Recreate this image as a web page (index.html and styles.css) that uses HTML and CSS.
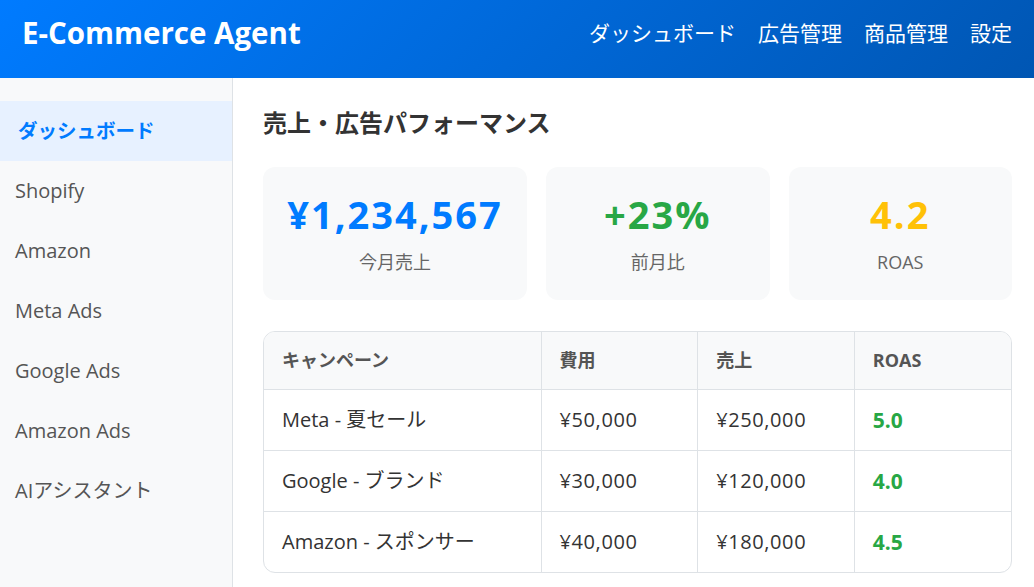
FILE: index.html
```html
<!DOCTYPE html>
<html lang="ja">
<head>
<meta charset="utf-8">
<title>E-Commerce Agent</title>
<link rel="stylesheet" href="styles.css">
</head>
<body>
<header class="topbar">
  <div class="brand">E-Commerce Agent</div>
  <nav class="topnav">
    <a>ダッシュボード</a>
    <a>広告管理</a>
    <a>商品管理</a>
    <a>設定</a>
  </nav>
</header>
<div class="layout">
  <aside class="sidebar">
    <div class="side-item active">ダッシュボード</div>
    <div class="side-item">Shopify</div>
    <div class="side-item">Amazon</div>
    <div class="side-item">Meta Ads</div>
    <div class="side-item">Google Ads</div>
    <div class="side-item">Amazon Ads</div>
    <div class="side-item">AIアシスタント</div>
  </aside>
  <main class="main">
    <h2 class="title">売上・広告パフォーマンス</h2>
    <div class="cards">
      <div class="card">
        <div class="value blue">¥1,234,567</div>
        <div class="label">今月売上</div>
      </div>
      <div class="card">
        <div class="value green">+23%</div>
        <div class="label">前月比</div>
      </div>
      <div class="card">
        <div class="value yellow">4.2</div>
        <div class="label">ROAS</div>
      </div>
    </div>
    <div class="table-wrap">
      <table class="table">
        <thead>
          <tr><th>キャンペーン</th><th>費用</th><th>売上</th><th>ROAS</th></tr>
        </thead>
        <tbody>
          <tr><td>Meta - 夏セール</td><td class="num">¥50,000</td><td class="num">¥250,000</td><td class="roas">5.0</td></tr>
          <tr><td>Google - ブランド</td><td class="num">¥30,000</td><td class="num">¥120,000</td><td class="roas">4.0</td></tr>
          <tr><td>Amazon - スポンサー</td><td class="num">¥40,000</td><td class="num">¥180,000</td><td class="roas">4.5</td></tr>
        </tbody>
      </table>
    </div>
  </main>
</div>
</body>
</html>
```
FILE: styles.css
```css
* { box-sizing: border-box; }
html, body { margin: 0; padding: 0; }
body {
  font-family: "Open Sans", "Noto Sans CJK JP", sans-serif;
  color: #333;
  background: #fff;
  width: 1034px;
  height: 587px;
  overflow: hidden;
}
.topbar {
  height: 78px;
  background: linear-gradient(135deg, #007bff 0%, #0056b3 100%);
  color: #fff;
  display: flex;
  align-items: center;
  justify-content: space-between;
  padding: 0 22px 12px 22px;
}
.brand {
  font-size: 29.5px;
  font-weight: 700;
  line-height: 36px;
}
.topnav {
  display: flex;
  gap: 22px;
}
.topnav a {
  font-size: 21px;
  line-height: 30px;
  color: #fff;
}
.layout {
  display: flex;
  height: 509px;
}
.sidebar {
  width: 233px;
  flex: none;
  background: #f8f9fa;
  border-right: 1px solid #dee2e6;
  padding-top: 23px;
}
.side-item {
  height: 60px;
  display: flex;
  align-items: center;
  padding-left: 15px;
  font-size: 20px;
  line-height: 28px;
  color: #555;
}
.side-item.active {
  background: #e7f1ff;
  color: #007bff;
  font-weight: 700;
  font-size: 19.5px;
  padding-left: 18px;
}
.main {
  flex: 1;
  padding: 22px 22px 0 30px;
}
.title {
  margin: 0;
  font-size: 24px;
  font-weight: 700;
  color: #333;
  height: 45px;
  line-height: 34px;
  display: flex;
  align-items: center;
}
.cards {
  margin-top: 22px;
  display: grid;
  grid-template-columns: 264px 1fr 1fr;
  gap: 19px;
}
.card {
  background: #f8f9fa;
  border-radius: 12px;
  height: 133px;
  display: flex;
  flex-direction: column;
  align-items: center;
  padding-top: 24px;
}
.value {
  font-size: 38px;
  font-weight: 700;
  line-height: 46px;
  letter-spacing: 2px;
}
.value.blue { color: #007bff; }
.value.green { color: #28a745; }
.value.yellow { color: #ffc107; }
.label {
  margin-top: 12px;
  font-size: 18px;
  line-height: 26px;
  color: #666;
}
.table-wrap {
  margin-top: 31px;
  border: 1px solid #dee2e6;
  border-radius: 12px;
  overflow: hidden;
}
.table {
  width: 100%;
  border-collapse: collapse;
  table-layout: fixed;
}
.table th:nth-child(1) { width: 277px; }
.table th, .table td {
  text-align: left;
  padding: 0 18px;
  border-right: 1px solid #dee2e6;
  line-height: 28px;
}
.table th:last-child, .table td:last-child { border-right: none; }
.table th {
  height: 57px;
  background: #f8f9fa;
  font-size: 18px;
  font-weight: 700;
  color: #555;
  border-bottom: 1px solid #dee2e6;
}
.table td {
  height: 61px;
  font-size: 20px;
  color: #333;
  border-bottom: 1px solid #dee2e6;
}
.table td.num { letter-spacing: 0.6px; }
.table tbody tr:last-child td { border-bottom: none; }
.table td.roas {
  color: #28a745;
  font-weight: 700;
  font-size: 21px;
}
```
